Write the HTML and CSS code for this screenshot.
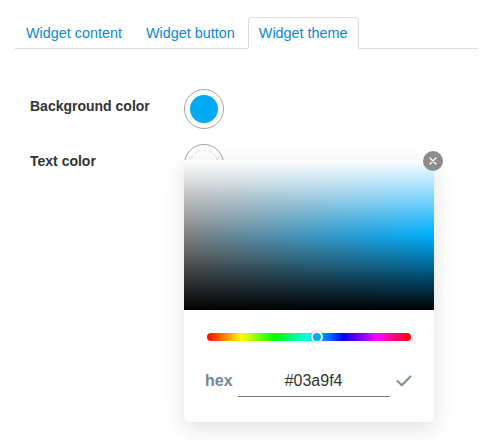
FILE: index.html
```html
<!DOCTYPE html>
<html>
<head>
<meta charset="utf-8">
<link rel="stylesheet" href="styles.css">
</head>
<body>
<div class="page">
  <ul class="tabs">
    <li class="tab"><a>Widget content</a></li>
    <li class="tab"><a>Widget button</a></li>
    <li class="tab active"><a>Widget theme</a></li>
  </ul>
  <div class="settings">
    <div class="row">
      <div class="label">Background color</div>
      <div class="swatch-wrap">
        <div class="swatch"><span class="swatch-fill filled"></span></div>
      </div>
    </div>
    <div class="row">
      <div class="label">Text color</div>
      <div class="swatch-wrap">
        <div class="swatch"><span class="swatch-fill empty"></span></div>
        <div class="picker">
          <div class="sl-area"></div>
          <button class="close" aria-label="Close">
            <svg width="8" height="8" viewBox="0 0 8 8"><path d="M1 1L7 7M7 1L1 7" stroke="#fff" stroke-width="1.4" stroke-linecap="round"/></svg>
          </button>
          <div class="picker-body">
            <div class="hue">
              <span class="hue-thumb"></span>
            </div>
            <div class="editor">
              <span class="hex-label">hex</span>
              <input class="hex-input" type="text" value="#03a9f4">
              <svg class="done" width="16" height="12" viewBox="0 0 16 12"><polyline points="1.5,6 5.8,10.2 14.5,1.5" fill="none" stroke="#7a8aa0" stroke-width="2" stroke-linecap="round" stroke-linejoin="round"/></svg>
            </div>
          </div>
        </div>
      </div>
    </div>
  </div>
</div>
</body>
</html>
```

FILE: styles.css
```css
html, body {
  margin: 0;
  padding: 0;
  background: #fff;
}

.page {
  min-height: 440px;
  font-family: "Liberation Sans", Arial, sans-serif;
  color: #333;
}

.tabs {
  display: flex;
  list-style: none;
  margin: 17px 13px 0 15px;
  padding: 0;
  border-bottom: 1px solid #dcdcdc;
}

.tab {
  margin-right: 2px;
  margin-bottom: -1px;
}

.tab a {
  display: block;
  padding: 5px 10px;
  line-height: 20px;
  font-size: 14.4px;
  color: #0a88d2;
  border: 1px solid transparent;
  border-radius: 4px 4px 0 0;
}

.tab.active a {
  border-color: #dcdcdc #dcdcdc transparent;
  background: #fff;
}

.settings {
  display: flex;
  flex-direction: column;
  gap: 15px;
  margin-top: 40px;
  padding-left: 30px;
}

.row {
  display: flex;
  align-items: flex-start;
}

.label {
  width: 154px;
  padding-top: 7px;
  line-height: 20px;
  font-size: 14px;
  font-weight: bold;
  color: #333;
}

.swatch-wrap {
  position: relative;
}

.swatch {
  width: 40px;
  height: 40px;
  box-sizing: border-box;
  border: 1px solid #a3a3a3;
  border-radius: 50%;
  display: flex;
  align-items: center;
  justify-content: center;
}

.swatch-fill {
  width: 28px;
  height: 28px;
  border-radius: 50%;
  box-sizing: border-box;
}

.swatch-fill.filled {
  background: #03a9f4;
}

.swatch-fill.empty {
  border: 1px dashed #e2e2e2;
}

.picker {
  position: absolute;
  left: 0;
  top: 16px;
  width: 250px;
  background: #fff;
  border-radius: 0 0 6px 6px;
  box-shadow: 0 6px 22px rgba(0, 0, 0, 0.13);
  z-index: 2;
}

.sl-area {
  height: 150px;
  background-color: #00aeff;
  background-image:
    linear-gradient(180deg, #fff, rgba(255, 255, 255, 0) 50%),
    linear-gradient(0deg, #000, rgba(0, 0, 0, 0) 50%),
    linear-gradient(90deg, #808080, rgba(128, 128, 128, 0));
}

.close {
  position: absolute;
  left: 239px;
  top: -9px;
  width: 20px;
  height: 20px;
  padding: 0;
  border: none;
  border-radius: 50%;
  background: #8c8c8c;
  display: flex;
  align-items: center;
  justify-content: center;
}

.picker-body {
  padding: 23px 23px 25px;
}

.hue {
  position: relative;
  height: 8px;
  border-radius: 4px;
  background: linear-gradient(90deg, #f00, #ff0, #0f0, #0ff, #00f, #f0f, #f00);
}

.hue-thumb {
  position: absolute;
  left: 104px;
  top: -2px;
  width: 12px;
  height: 12px;
  box-sizing: border-box;
  border-radius: 50%;
  background: #03a9f4;
  border: 2px solid #fff;
  box-shadow: 0 0 2px rgba(0, 0, 0, 0.25);
}

.editor {
  display: flex;
  align-items: center;
  margin: 24px -2px 0;
}

.hex-label {
  font-size: 16px;
  font-weight: bold;
  color: #74849a;
  margin-right: 5px;
}

.hex-input {
  width: 152px;
  height: 32px;
  box-sizing: border-box;
  padding: 0;
  border: none;
  border-bottom: 1px solid #777;
  outline: none;
  text-align: center;
  font-family: "Liberation Sans", Arial, sans-serif;
  font-size: 16px;
  color: #333;
  background: transparent;
}

.done {
  margin-left: 6px;
}
```
